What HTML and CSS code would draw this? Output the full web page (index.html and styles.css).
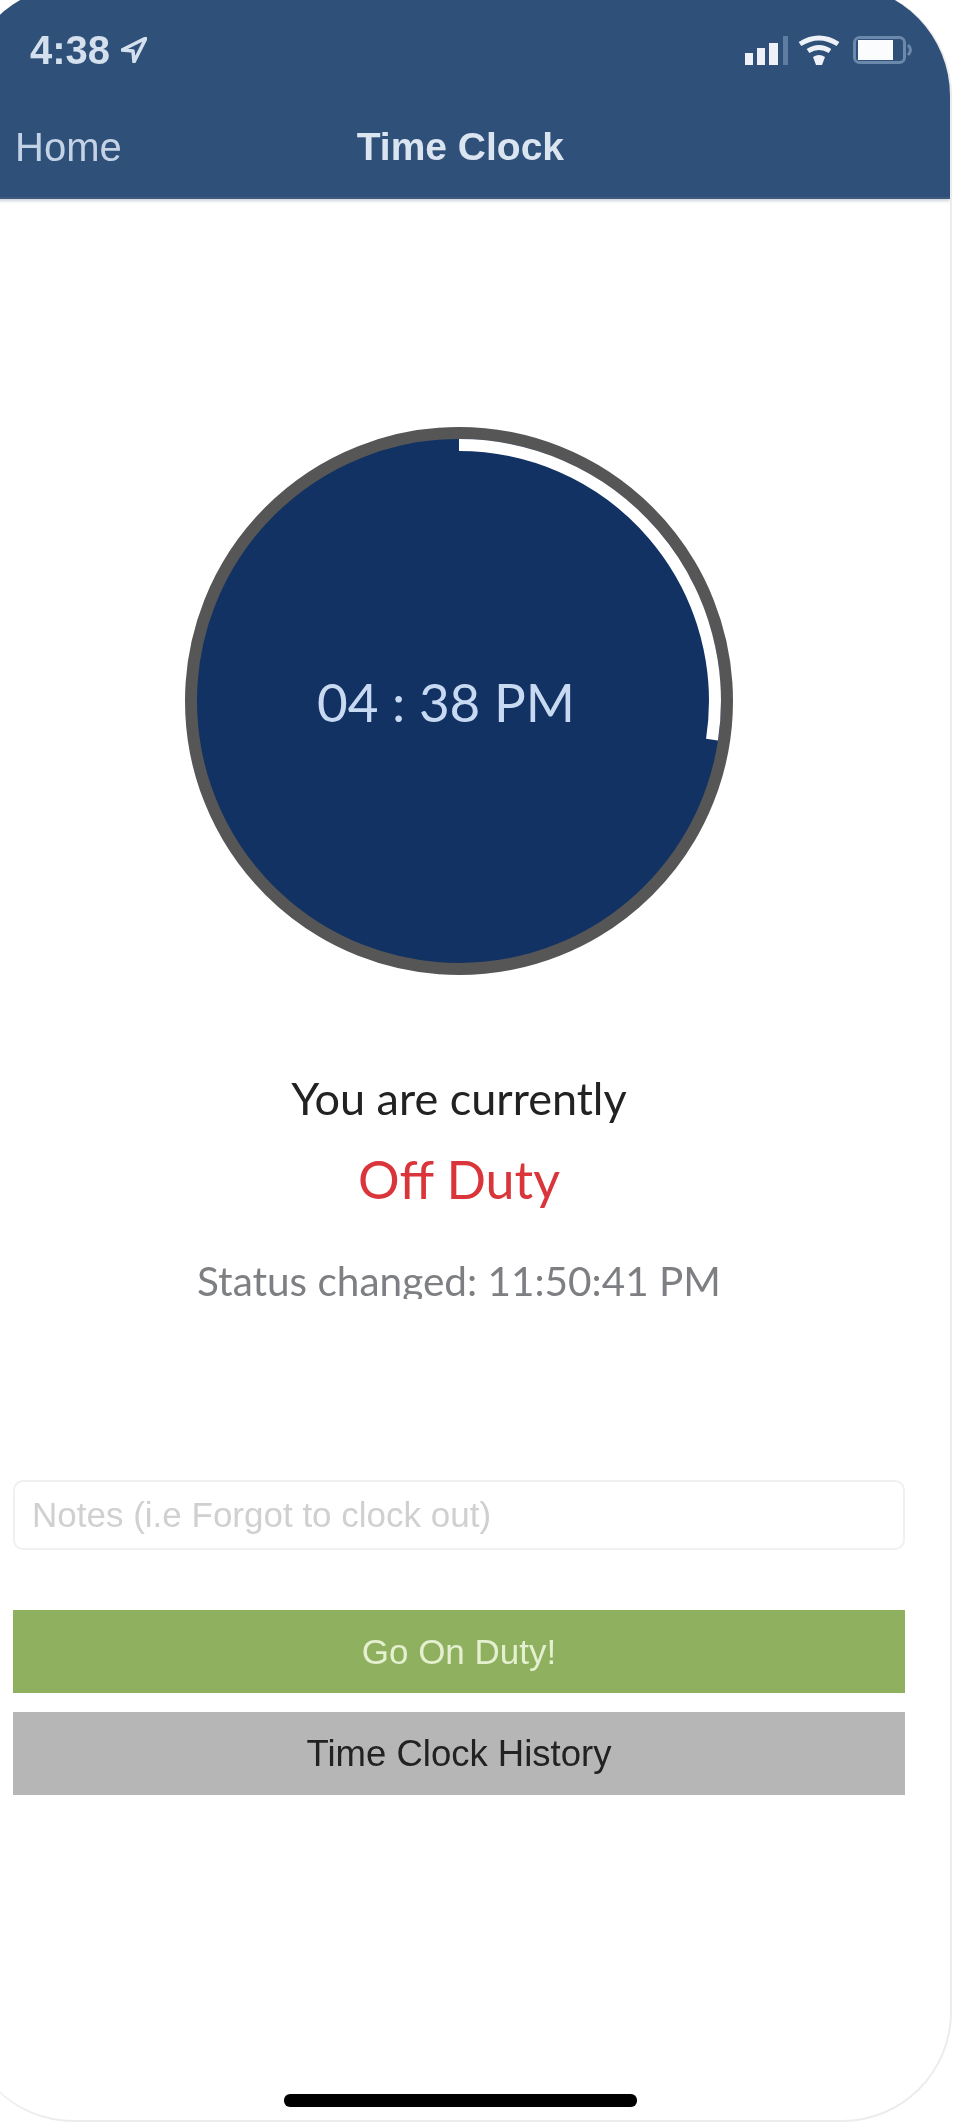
FILE: index.html
```html
<!DOCTYPE html>
<html lang="en">
<head>
	<meta charset="UTF-8">
	<title>Time Clock</title>
	<link rel="stylesheet" href="styles.css">
</head>
<body>
	<div class="phone">
		<div class="top-bar">
			<div class="status-bar">
				<div class="clock">
					<span>4:38</span>
					<svg class="arrow" width="26" height="26" viewBox="0 0 26 26"><path d="M25 1 L1 13 L12 14 L13 25 Z" fill="none" stroke="#d5e0ee" stroke-width="3.5" stroke-linejoin="round"/></svg>
				</div>
				<div class="icons">
					<svg width="43" height="30" viewBox="0 0 43 30">
						<rect x="0" y="18" width="8" height="12" fill="#eef2f8"/>
						<rect x="12" y="13" width="8" height="17" fill="#eef2f8"/>
						<rect x="24" y="8" width="9" height="22" fill="#eef2f8"/>
						<rect x="38" y="1" width="5" height="29" fill="#5f7da0"/>
					</svg>
					<svg width="42" height="30" viewBox="0 0 42 30">
						<path d="M2 9 Q21 -3 40 9 M10 16 Q21 9 32 16" fill="none" stroke="#eef2f8" stroke-width="5"/>
						<path d="M15 22 Q21 18 27 22 L24 30 L18 30 Z" fill="#eef2f8"/>
					</svg>
					<svg class="battery" width="62" height="30" viewBox="0 0 62 30">
						<rect x="1.5" y="2.5" width="50" height="25" rx="5" fill="none" stroke="#6c88aa" stroke-width="3"/>
						<rect x="5" y="5" width="35" height="20" fill="#fbfcfe"/>
						<path d="M55 10 Q60 15 55 20" fill="none" stroke="#6c88aa" stroke-width="3"/>
					</svg>
				</div>
			</div>
			<div class="nav-bar">
				<span class="nav-back">Home</span>
				<span class="nav-title">Time Clock</span>
			</div>
		</div>

		<div class="content">
			<div class="dial">
				<svg class="dial-arc" width="548" height="548" viewBox="0 0 548 548">
					<path d="M274 18 A256 256 0 0 1 527 312.7" fill="none" stroke="#fff" stroke-width="12"/>
				</svg>
				<span class="dial-time">04 : 38 PM</span>
			</div>

			<p class="current">You are currently</p>
			<p class="duty">Off Duty</p>
			<p class="changed">Status changed: 11:50:41 PM</p>

			<input class="notes" type="text" placeholder="Notes (i.e Forgot to clock out)">
			<button class="btn btn-go">Go On Duty!</button>
			<button class="btn btn-history">Time Clock History</button>
		</div>

		<div class="home-line"></div>
	</div>
</body>
</html>
```

FILE: styles.css
```css
html,body,div,p,span,input,button {
	margin: 0;
	padding: 0;
}
html,body {
	width: 960px;
	height: 2126px;
	overflow: hidden;
	background-color: #fff;
}
.phone {
	display: flex;
	flex-direction: column;
	box-sizing: border-box;
	width: 988px;
	height: 2136px;
	margin: -14px 0 0 -36px;
	border: 2px solid #ececec;
	border-top: 0;
	border-left: 0;
	border-radius: 110px;
	overflow: hidden;
	background-color: #fff;
	font-family: "Liberation Sans", Arial, sans-serif;
	filter: blur(0.6px);
}
.top-bar {
	flex: none;
	box-sizing: border-box;
	height: 213px;
	padding-top: 44px;
	background-color: #2f5078;
	border-bottom: 2px solid #3f5a7c;
	box-shadow: 0 2px 3px #ccd4de;
}
.status-bar {
	display: flex;
	justify-content: space-between;
	align-items: center;
	height: 34px;
	margin-top: 3px;
	padding: 0 35px 0 66px;
}
.clock {
	display: flex;
	align-items: center;
	gap: 11px;
	font-size: 40px;
	font-weight: bold;
	color: #d5e0ee;
}
.icons {
	display: flex;
	align-items: center;
	gap: 10px;
}
.battery {
	margin-left: 3px;
}
.nav-bar {
	display: flex;
	align-items: center;
	height: 46px;
	margin-top: 57px;
	padding-left: 51px;
	font-size: 39px;
}
.nav-back {
	font-size: 40px;
	color: #c3d2e5;
}
.nav-title {
	margin-left: 235px;
	font-weight: bold;
	color: #dbe5f1;
}
.content {
	display: flex;
	flex-direction: column;
	align-items: center;
	padding: 228px 46px 0 50px;
	font-family: Lato, sans-serif;
}
.dial {
	position: relative;
	display: flex;
	justify-content: center;
	align-items: center;
	box-sizing: border-box;
	width: 548px;
	height: 548px;
	border: 12px solid #565656;
	border-radius: 50%;
	background-color: #123264;
}
.dial-arc {
	position: absolute;
	top: -12px;
	left: -12px;
}
.dial-time {
	margin-right: 26px;
	font-size: 53px;
	color: #c8daf2;
}
.current {
	margin-top: 93px;
	font-size: 45px;
	line-height: 60px;
	color: #222;
}
.duty {
	margin-top: 19px;
	font-size: 52px;
	line-height: 64px;
	color: #d9353a;
}
.changed {
	height: 42px;
	margin-top: 46px;
	overflow: hidden;
	font-size: 40.5px;
	line-height: 48px;
	color: #7d7f82;
}
.notes {
	box-sizing: border-box;
	width: 892px;
	height: 70px;
	margin-top: 181px;
	padding: 0 17px;
	border: 2px solid #f0f0f0;
	border-radius: 10px;
	outline: 0;
	font-family: "Liberation Sans", Arial, sans-serif;
	font-size: 35px;
}
.notes::placeholder {
	color: #d0d0d0;
}
.btn {
	flex: none;
	width: 892px;
	height: 83px;
	border: 0;
	font-family: "Liberation Sans", Arial, sans-serif;
	font-size: 35px;
}
.btn-go {
	margin-top: 60px;
	background-color: #8fb05e;
	color: #e4f0d0;
}
.btn-history {
	margin-top: 19px;
	background-color: #b6b6b6;
	color: #222;
	font-size: 36.5px;
}
.home-line {
	flex: none;
	width: 353px;
	height: 13px;
	margin: auto 0 13px 320px;
	border-radius: 6px;
	background-color: #000;
}
```
